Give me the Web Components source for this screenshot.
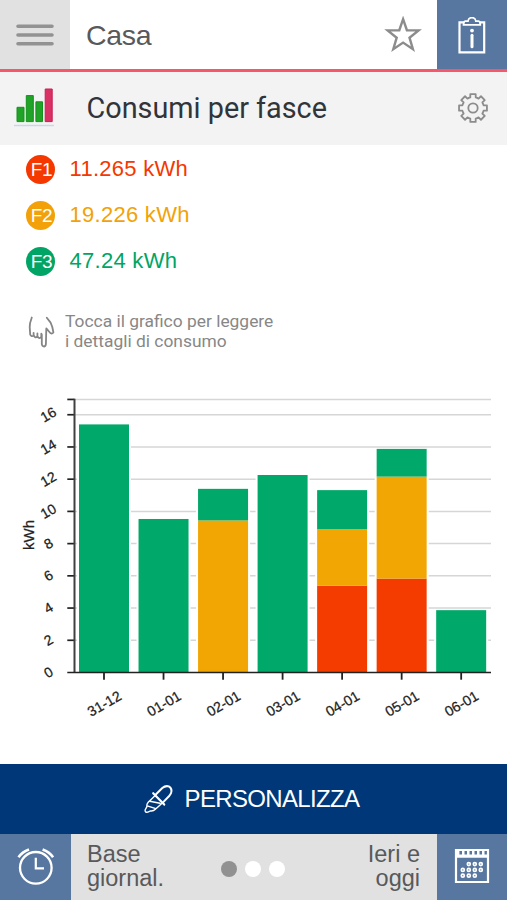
<!DOCTYPE html>
<html lang="it">
<head>
<meta charset="utf-8">
<title>Consumi per fasce</title>
<style>
html,body{margin:0;height:100%;background:#fff}
body{font-family:"Liberation Sans",Arial,sans-serif;overflow:hidden}
</style>
</head>
<body>
<energy-app></energy-app>
<script>
function define(name, html, setup) {
  const template = document.createElement('template');
  template.innerHTML = html;
  customElements.define(name, class extends HTMLElement {
    connectedCallback() {
      if (this.shadowRoot) return;
      this.attachShadow({mode: 'open'}).append(template.content.cloneNode(true));
      if (setup) setup(this, this.shadowRoot);
    }
  });
}

const ICONS = {
  menu: [38, 24, '<g stroke="#929292" stroke-width="3.6" stroke-linecap="round"><path d="M2 3.3H36M2 12H36M2 20.7H36"/></g>'],
  star: [38, 38, '<path d="M19.1 3.2 22.9 14.2 34.6 14.4 25.5 21.7 28.9 33.2 19.1 26.6 9.3 33.2 12.7 21.7 3.6 14.4 15.3 14.2Z" fill="none" stroke="#8c8c8c" stroke-width="2.4"/>'],
  clip: [30, 38, '<g fill="none" stroke="#fff" stroke-width="2"><path d="M7.5 5.3H2.5V35.4H27.2V5.3H22.2" stroke-width="2.2"/><path d="M11 4.2C11.4-.6 18.4-.6 18.8 4.2H21.6Q23.3 4.4 23.3 7.8H6.5Q6.5 4.4 8.2 4.2Z" stroke-width="1.7"/><path d="M15 18.2V29.8" stroke-width="3" stroke-linecap="round"/></g><circle cx="15" cy="13.6" r="1.9" fill="#fff"/>'],
  bars: [42, 40, '<path d="M0 37.5H40" stroke="#cbd6e9" stroke-width="1.7"/><g fill="#21a328" stroke="#12931d" stroke-width="1"><path d="M3 19.3H10V33.6H3ZM12.3 7.6H19.3V33.6H12.3ZM21.9 13.8H28.5V33.6H21.9Z"/></g><path d="M31.2 1H38.2V33.6H31.2Z" fill="#d93164" stroke="#c91f58"/>'],
  gear: [34, 34, ''],
  hand: [30, 34, '<g fill="none" stroke="#858585" stroke-width="1.8" stroke-linecap="round" stroke-linejoin="round"><path d="M4.8 2.5Q2.7 8 2.7 12L3.2 19.6Q4.6 22.2 6.6 20.6V17.8M6.6 20.2Q8.2 23.8 10.4 21.4V18.4M10.4 21.2Q12.2 24.6 14.3 21.8V18.6M14.8 19.5V29.2Q15.2 31.5 17 31.5 18.7 31.5 18.9 29.2L19.3 13.4 23.3 18Q25.4 19.2 26.4 17.4 25.6 11.5 23.6 7.6L19.8 2.8"/></g>'],
  dropper: [30, 30, '<g fill="none" stroke="#fff" stroke-linejoin="round" stroke-linecap="round"><path d="M11.3 11 18.3 4Q21.4 1.4 24.8 2.4 28.7 4.8 27 9.2 26.3 10.7 25.4 11.7L18.8 18.6" stroke-width="2"/><path d="M9.2 9.2 20.2 20.6" stroke-width="2.2"/><path d="M11.2 11.4 4.2 18.2Q2.5 20 2.8 22.8L1.1 26Q.9 28.6 3.8 28.1L6.6 26.9Q9.4 27.2 11.4 25.3L18.6 18.8M5.8 17.3 16 19.3M3.3 21.8 11.8 24.6" stroke-width="1.4"/></g>'],
  alarm: [38, 40, '<g fill="none" stroke="#fff" stroke-width="2.3"><circle cx="18.8" cy="21.8" r="15.8"/><path d="M18.8 11.8V22.3H27" stroke-width="2.2"/><path d="M1.5 11.2Q5.2 6 12 3.5M25.6 3.5Q32.4 6 36.1 11.2" stroke-width="2.6"/></g>'],
  calendar: [36, 36, '']
};
(() => {
  /* Eight-toothed outline, alternating outer and inner arcs */
  const n = 8, p = (r, a) => (17 + r * Math.sin(a)).toFixed(2) + ' ' + (17 - r * Math.cos(a)).toFixed(2);
  let d = '';
  for (let i = 0; i < n; i++) {
    const a = i * Math.PI / 4;
    d += (i ? 'L' : 'M') + p(10.9, a - .25) + 'L' + p(14.2, a - .19) + 'L' + p(14.2, a + .19) + 'L' + p(10.9, a + .25) +
      'A10.9 10.9 0 0 1 ' + p(10.9, a + Math.PI / 4 - .25);
  }
  ICONS.gear[2] = `<g fill="none" stroke="#8c8c8c" stroke-width="1.8" stroke-linejoin="round"><path d="${d}Z"/><circle cx="17" cy="17" r="4.7"/></g>`;
  let dots = '';
  [[14.8, 20.8, 26.8], [8.8, 14.8, 20.8, 26.8], [8.8, 14.8, 20.8]].forEach((row, j) =>
    row.forEach(x => dots += `<circle cx="${x}" cy="${16.1 + j * 5.8}" r="1.5"/>`));
  ICONS.calendar[2] = `<g fill="none" stroke="#fff" stroke-width="1.7"><path d="M2 2H34V34H2Z" stroke-width="2.2"/>${dots}</g>
    <path d="M2 2H5.4V6.5H8V2H10.5V6.5H13V2H15.5V6.5H18V2H20.5V6.5H23V2H25.5V6.5H28V2H30.5V6.5H34V9.8H2Z" fill="#fff"/>`;
})();

define('ui-icon', '<style>:host{display:block;flex:none}svg{display:block}</style>', (el, root) => {
  const [w, h, body] = ICONS[el.getAttribute('name')];
  const holder = document.createElement('div');
  holder.innerHTML = `<svg width="${w}" height="${h}" viewBox="0 0 ${w} ${h}">${body}</svg>`;
  root.append(holder);
});

define('top-bar', `<style>
:host{display:grid;grid-template-columns:70px 1fr 70px;height:69px;border-bottom:3px solid #f75869;box-sizing:content-box;background:#fff}
.menu{background:#e1e1e1;display:grid;place-items:center}
.main{display:flex;align-items:center;justify-content:space-between;padding:0 15px 0 16px}
h1{margin:0;font:400 28.5px/34px "Liberation Sans",Arial,sans-serif;color:#58595b;letter-spacing:-.3px}
.info{background:#5776a0;display:grid;place-items:center;padding:3px 1px 0 0}
</style><div class="menu"><ui-icon name="menu"></ui-icon></div>
<div class="main"><h1><slot></slot></h1><ui-icon name="star"></ui-icon></div>
<div class="info"><ui-icon name="clip"></ui-icon></div>`);

define('section-header', `<style>
:host{display:flex;align-items:center;height:73px;background:#f3f3f3;padding:0 17px 2px 14px;box-sizing:border-box}
h2{margin:0 auto 0 30.5px;font:400 28.8px/36px Roboto,sans-serif;color:#313439;white-space:nowrap}
</style><ui-icon name="bars"></ui-icon><h2><slot></slot></h2><ui-icon name="gear"></ui-icon>`);

define('band-row', `<style>
:host{display:flex;align-items:center;height:46px;color:var(--band)}
.badge{width:29px;height:29px;border-radius:50%;background:var(--band);color:#fff;display:grid;place-items:center;font-size:19px;line-height:29px;text-indent:2px;letter-spacing:-.4px;margin-right:14.5px}
.value{font-size:22px;line-height:26px;letter-spacing:.28px;white-space:nowrap}
</style><span class="badge"></span><span class="value"><slot></slot></span>`, (el, root) => {
  root.querySelector('.badge').textContent = el.getAttribute('band');
});

define('touch-hint', `<style>
:host{display:flex;align-items:flex-start;gap:8px;font:400 17.4px/20px Roboto,sans-serif;color:#878787}
ui-icon{margin-top:4px}p{margin:0;white-space:nowrap}
</style><ui-icon name="hand"></ui-icon><p><slot></slot></p>`);

define('band-chart', `<style>:host{display:block}svg{display:block}
text{font-family:"Liberation Sans",Arial,sans-serif;fill:#222;stroke:#222;stroke-width:.25px}</style>`, (el, root) => {
  const colors = ['#f43c00', '#f2a603', '#00a869'];
  const data = [
    ['31-12', 0, 0, 15.4], ['01-01', 0, 0, 9.53], ['02-01', 0, 9.44, 1.96], ['03-01', 0, 0, 12.26],
    ['04-01', 5.39, 3.51, 2.42], ['05-01', 5.83, 6.33, 1.72], ['06-01', 0, 0, 3.87]];
  const unit = 16.11, base = 287.5, left = 74.5, right = 491;
  const y = v => base - v * unit;
  let s = '';
  for (const v of [2, 4, 6, 8, 10, 12, 14, 16, 16.95])
    s += `<path d="M${left} ${y(v)}H${right}" stroke="#d6d6d6" stroke-width="1.5"/><path d="M67.3 ${y(v)}H${left}" stroke="#222" stroke-width="1.7"/>`;
  for (let v = 0; v <= 16; v += 2)
    s += `<text transform="translate(48.5 ${y(v)}) rotate(-30)" text-anchor="middle" y="4.7" font-size="14">${v}</text>`;
  data.forEach(([label, ...parts], i) => {
    const x = 79 + i * 59.53;
    const total = parts.reduce((a, b) => a + b);
    let sum = 0;
    s += `<rect x="${x - 2}" y="${y(total)}" width="54" height="${total * unit}" fill="#fff"/>`;
    parts.forEach((v, k) => {
      if (v) s += `<rect x="${x}" y="${y(sum + v)}" width="50" height="${v * unit}" fill="${colors[k]}"/>`;
      sum += v;
    });
    s += `<path d="M${x + 25} ${base}V294.7" stroke="#222" stroke-width="1.8"/>
      <text transform="translate(${x + 25.3} 318.5) rotate(-30)" text-anchor="middle" y="5" font-size="14.2">${label}</text>`;
  });
  s += `<path d="M${left} ${y(16.95) - .8}V${base}" stroke="#404040" stroke-width="2"/>
    <path d="M67.3 ${base}H${right}" stroke="#222" stroke-width="1.6"/>
    <text transform="translate(34 150) rotate(-90)" text-anchor="middle" font-size="15">kWh</text>`;
  const holder = document.createElement('div');
  holder.innerHTML = `<svg width="507" height="340" viewBox="0 0 507 340">${s}</svg>`;
  root.append(holder);
});

define('action-button', `<style>
:host{display:flex;justify-content:center;align-items:center;gap:11px;height:70px;background:#003778;color:#fff;font-size:24px;line-height:28px;letter-spacing:-.65px}
span{margin-right:4px}
</style><ui-icon name="dropper"></ui-icon><span><slot></slot></span>`);

define('page-dots', `<style>:host{display:flex;gap:8px;margin:4px 1px 0 0}i{width:16px;height:16px;border-radius:50%;background:#fff}i:first-of-type{background:#919191}</style><i></i><i></i><i></i>`);

define('bottom-bar', `<style>
:host{display:grid;grid-template-columns:71px 1fr 70px;height:66px;background:#e1e1e1;color:#58595b;font-size:23.5px;line-height:23.5px}
.cell{background:#5776a0;display:grid;place-items:center;padding-bottom:3px}
.mid{display:grid;grid-template-columns:1fr auto 1fr;align-items:center;padding:0 17px 1px 16px}
.end{text-align:right}
</style><div class="cell"><ui-icon name="alarm"></ui-icon></div>
<div class="mid"><div><slot name="start"></slot></div><page-dots></page-dots><div class="end"><slot name="end"></slot></div></div>
<div class="cell"><ui-icon name="calendar"></ui-icon></div>`);

define('energy-app', `<style>
:host{display:flex;flex-direction:column;height:900px;width:507px;background:#fff}
.bands{padding:1px 26px 0;height:144px;box-sizing:border-box}
touch-hint{padding:22px 27px 0}
band-chart{margin-top:34px}
.foot{margin-top:auto}
</style>
<top-bar>Casa</top-bar>
<section-header>Consumi per fasce</section-header>
<div class="bands">
<band-row band="F1" style="--band:#f43800">11.265 kWh</band-row>
<band-row band="F2" style="--band:#f2a208">19.226 kWh</band-row>
<band-row band="F3" style="--band:#00a565">47.24 kWh</band-row>
</div>
<touch-hint>Tocca il grafico per leggere<br>i dettagli di consumo</touch-hint>
<band-chart></band-chart>
<div class="foot">
<action-button>PERSONALIZZA</action-button>
<bottom-bar><span slot="start">Base<br>giornal.</span><span slot="end">Ieri e<br>oggi</span></bottom-bar>
</div>`);
</script>
</body>
</html>
